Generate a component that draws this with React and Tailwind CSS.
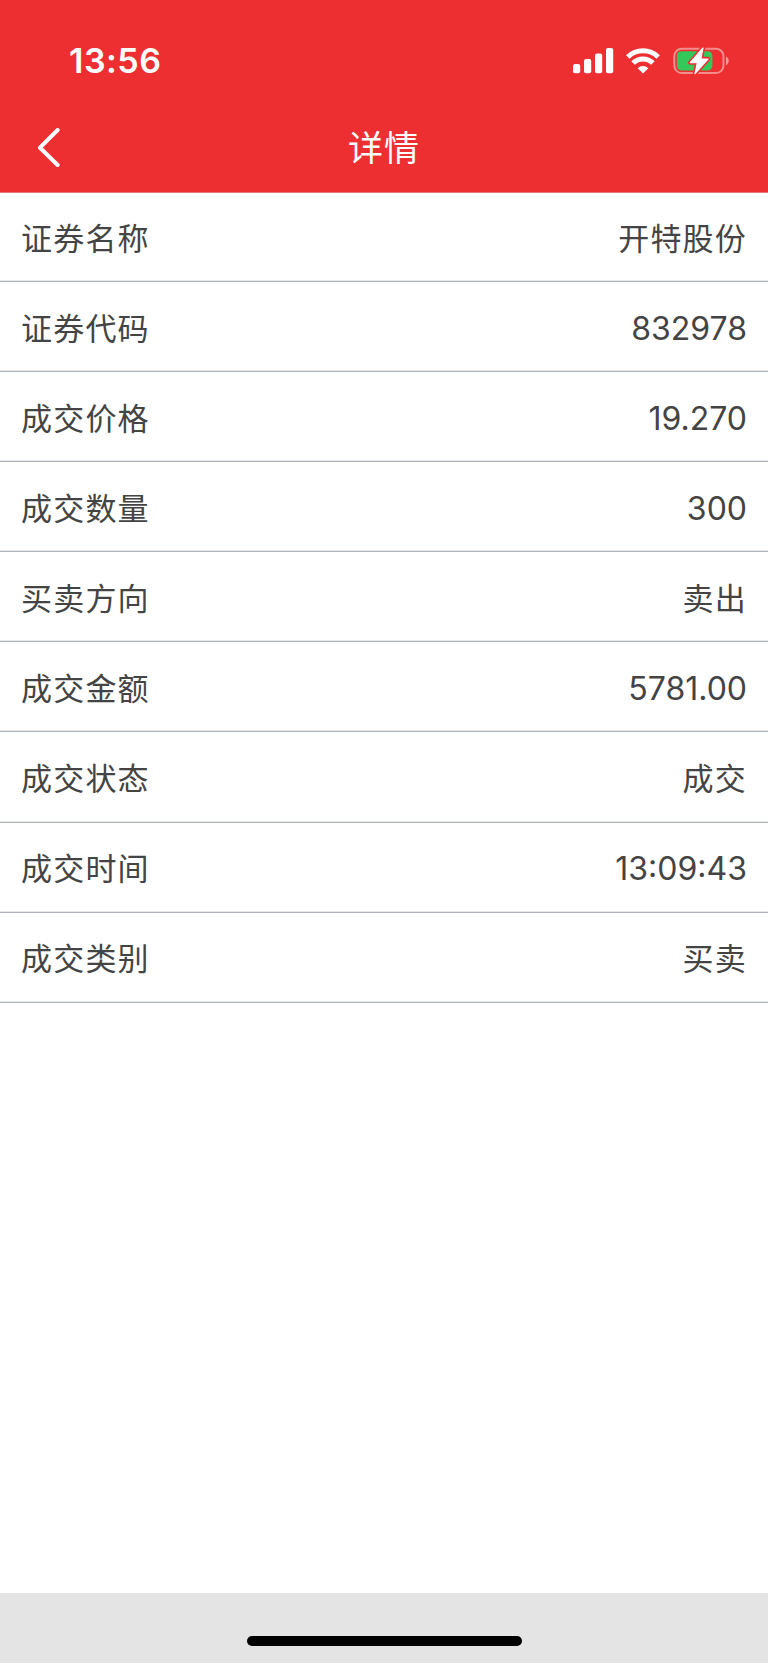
import React from 'react';

const rows = [
  { label: '证券名称', value: '开特股份', cjk: true },
  { label: '证券代码', value: '832978' },
  { label: '成交价格', value: '19.270' },
  { label: '成交数量', value: '300' },
  { label: '买卖方向', value: '卖出', cjk: true },
  { label: '成交金额', value: '5781.00' },
  { label: '成交状态', value: '成交', cjk: true },
  { label: '成交时间', value: '13:09:43' },
  { label: '成交类别', value: '买卖', cjk: true },
];

const SignalIcon = () => (
  <svg width="41" height="26" viewBox="0 0 41 26" fill="white">
    <rect x="0" y="16" width="7.2" height="9.3" rx="2" />
    <rect x="11" y="11" width="7.2" height="14.3" rx="2" />
    <rect x="22" y="5.5" width="7.2" height="19.8" rx="2" />
    <rect x="33" y="0" width="7.2" height="25.3" rx="2" />
  </svg>
);

const WifiIcon = () => (
  <svg width="34" height="26" viewBox="0 0 34 26" fill="none" stroke="white" strokeWidth="5">
    <path d="M1.8 9 A21.8 21.8 0 0 1 32.2 9" />
    <path d="M7.1 15 A14 14 0 0 1 26.9 15" />
    <path d="M17 25.4 L11.7 20.2 A7.6 7.6 0 0 1 22.3 20.2 Z" fill="white" stroke="none" />
  </svg>
);

const BatteryIcon = () => (
  <svg width="58" height="30" viewBox="0 0 58 30" fill="none">
    <rect x="1.3" y="2.8" width="49.2" height="24.2" rx="7.4" stroke="white" strokeOpacity="0.45" strokeWidth="2" />
    <path d="M53 10.6 C56.6 12 56.6 17.8 53 19.2 Z" fill="white" fillOpacity="0.5" />
    <rect x="3.8" y="5.2" width="35.6" height="19.2" rx="4.6" fill="#34c759" />
    <path d="M30 2 L17.2 16.6 H24.4 L22 27.6 L35 13 H27.8 Z" fill="white" stroke="#ed2f31" strokeWidth="4.4" strokeLinejoin="round" />
    <path d="M30 2 L17.2 16.6 H24.4 L22 27.6 L35 13 H27.8 Z" fill="white" stroke="white" strokeWidth="1.2" strokeLinejoin="round" />
  </svg>
);

// STATUS BAR
const StatusBar = () => (
  <div className="flex h-[104px] items-start justify-between pl-[69px] pr-[37px]">
    <span className="mt-[41px] text-[34px] leading-[40px] font-semibold tracking-[0.5px]">13:56</span>
    <div className="mt-[46px] flex items-start">
      <div className="mt-[2px]"><SignalIcon /></div>
      <div className="mt-[2px] ml-[12px]"><WifiIcon /></div>
      <div className="ml-[13px]"><BatteryIcon /></div>
    </div>
  </div>
);

// NAVIGATION
const NavBar = () => (
  <div className="grid h-[88px] grid-cols-[1fr_auto_1fr] items-center">
    <button type="button" aria-label="返回" className="ml-[37px] w-6">
      <svg width="24" height="40" viewBox="0 0 24 40" fill="none" stroke="white" strokeWidth="4" strokeLinecap="round" strokeLinejoin="round">
        <path d="M20.6 2 L3 19.7 L20.6 37" />
      </svg>
    </button>
    <h1 className="text-[35px] leading-[44px] tracking-[1px]">详情</h1>
  </div>
);

const DetailRow = ({ label, value, cjk }) => (
  <div className="flex h-[90.1px] items-center justify-between border-b border-[#adb4bc] px-[21px] pt-[4px] text-[32px] shadow-[inset_0_-1px_0_#e6e9ec] first:h-[89px]">
    <span className="pt-px text-[31px] tracking-[1.2px]">{label}</span>
    <span className={cjk ? 'pt-px text-[31px] tracking-[1.2px]' : 'font-[370]'}>{value}</span>
  </div>
);

const App = () => {
  return (
    <div className="flex h-[1663px] w-[768px] flex-col bg-white font-['Inter','Noto_Sans_CJK_SC',sans-serif] text-[#444444]">
      <header className="border-b border-[#e2797b] bg-[#ed2f31] text-white">
        <StatusBar />
        <NavBar />
      </header>

      <main className="flex-1">
        {rows.map((row) => (
          <DetailRow key={row.label} {...row} />
        ))}
      </main>

      {/* HOME INDICATOR */}
      <footer className="flex h-[70px] justify-center bg-[#e4e4e4] pt-[43px]">
        <div className="h-[10px] w-[275px] rounded-full bg-black" />
      </footer>
    </div>
  );
};

export default App;
